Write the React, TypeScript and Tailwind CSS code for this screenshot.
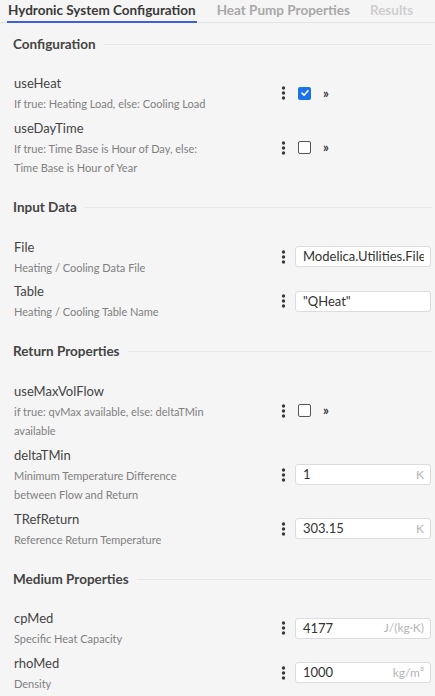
type Param = {
  name: string
  desc: string[]
  kind: 'check' | 'text'
  checked?: boolean
  value?: string
  unit?: string
}

type Section = { title: string; params: Param[] }

const sections: Section[] = [
  {
    title: 'Configuration',
    params: [
      { name: 'useHeat', desc: ['If true: Heating Load, else: Cooling Load'], kind: 'check', checked: true },
      {
        name: 'useDayTime',
        desc: ['If true: Time Base is Hour of Day, else:', 'Time Base is Hour of Year'],
        kind: 'check',
      },
    ],
  },
  {
    title: 'Input Data',
    params: [
      { name: 'File', desc: ['Heating / Cooling Data File'], kind: 'text', value: 'Modelica.Utilities.Files.loadResource()' },
      { name: 'Table', desc: ['Heating / Cooling Table Name'], kind: 'text', value: '"QHeat"' },
    ],
  },
  {
    title: 'Return Properties',
    params: [
      {
        name: 'useMaxVolFlow',
        desc: ['if true: qvMax available, else: deltaTMin', 'available'],
        kind: 'check',
      },
      {
        name: 'deltaTMin',
        desc: ['Minimum Temperature Difference', 'between Flow and Return'],
        kind: 'text',
        value: '1',
        unit: 'K',
      },
      { name: 'TRefReturn', desc: ['Reference Return Temperature'], kind: 'text', value: '303.15', unit: 'K' },
    ],
  },
  {
    title: 'Medium Properties',
    params: [
      { name: 'cpMed', desc: ['Specific Heat Capacity'], kind: 'text', value: '4177', unit: 'J/(kg·K)' },
      { name: 'rhoMed', desc: ['Density'], kind: 'text', value: '1000', unit: 'kg/m³' },
    ],
  },
]

function MoreDots() {
  return (
    <svg width="5" height="14" viewBox="0 0 5 14" className="shrink-0 text-[#3a3a3a]">
      <circle cx="2.5" cy="2" r="1.7" fill="currentColor" />
      <circle cx="2.5" cy="7" r="1.7" fill="currentColor" />
      <circle cx="2.5" cy="12" r="1.7" fill="currentColor" />
    </svg>
  )
}

function CheckBox({ checked }: { checked?: boolean }) {
  if (checked) {
    return (
      <span className="flex h-[13px] w-[13px] items-center justify-center rounded-[2px] bg-[#1a73e8]">
        <svg width="10" height="10" viewBox="0 0 10 10">
          <path d="M2 5.2 L4.1 7.2 L8 2.8" fill="none" stroke="#fff" strokeWidth="1.6" strokeLinecap="round" strokeLinejoin="round" />
        </svg>
      </span>
    )
  }
  return <span className="h-[13px] w-[13px] rounded-[2px] border border-[#555] bg-white" />
}

function Control({ p }: { p: Param }) {
  return (
    <div className="flex w-[154px] shrink-0 items-center gap-[9px] pr-[4px]">
      <MoreDots />
      {p.kind === 'check' ? (
        <div className="flex items-center gap-[12px] pl-[3px]">
          <CheckBox checked={p.checked} />
          <span className="text-[13px] font-bold leading-none text-[#333]">»</span>
        </div>
      ) : (
        <div className="flex h-[21px] min-w-0 flex-1 items-center overflow-hidden rounded-[3px] border border-[#dcdcdc] bg-white pl-[7px] pr-[6px]">
          <span className="flex-1 overflow-hidden whitespace-nowrap text-[13px] text-[#333]">{p.value}</span>
          {p.unit && <span className="shrink-0 text-[12px] text-[#b5b5b5]">{p.unit}</span>}
        </div>
      )}
    </div>
  )
}

function ParamRow({ p }: { p: Param }) {
  return (
    <div className="flex items-center">
      <div className="min-w-0 flex-1 pl-[14px]">
        <div className="text-[13px] leading-[21px] text-[#444]">{p.name}</div>
        {p.desc.map((line) => (
          <div key={line} className="text-[11px] leading-[19.5px] text-[#808080]">
            {line}
          </div>
        ))}
      </div>
      <Control p={p} />
    </div>
  )
}

function SectionBlock({ s, first }: { s: Section; first: boolean }) {
  return (
    <div className={first ? 'pt-[11px]' : 'pt-[20px]'}>
      <div className="flex h-[20px] items-center gap-[8px] pl-[13px] pr-[3px]">
        <span className="text-[13.5px] font-bold text-[#444]">{s.title}</span>
        <span className="h-px flex-1 bg-[#e6e6e6]" />
      </div>
      <div className="mt-[19px] flex flex-col gap-[4px]">
        {s.params.map((p) => (
          <ParamRow key={p.name} p={p} />
        ))}
      </div>
    </div>
  )
}

export default function App() {
  return (
    <div className="min-h-screen bg-[#f5f5f5] font-['Lato','Open_Sans',sans-serif]">
      <div className="flex h-[23px] items-start gap-[20px] border-b border-[#e3e3e3] pl-[7px]">
        <div className="-mb-px h-[23px] border-b-2 border-[#3d5fd9] px-px text-[13.5px] font-bold leading-[21px] text-[#3a3a3a]">
          Hydronic System Configuration
        </div>
        <div className="text-[13.5px] font-bold leading-[21px] text-[#a8a8a8]">Heat Pump Properties</div>
        <div className="text-[13.5px] font-bold leading-[21px] text-[#cfcfcf]">Results</div>
      </div>
      {sections.map((s, i) => (
        <SectionBlock key={s.title} s={s} first={i === 0} />
      ))}
    </div>
  )
}
